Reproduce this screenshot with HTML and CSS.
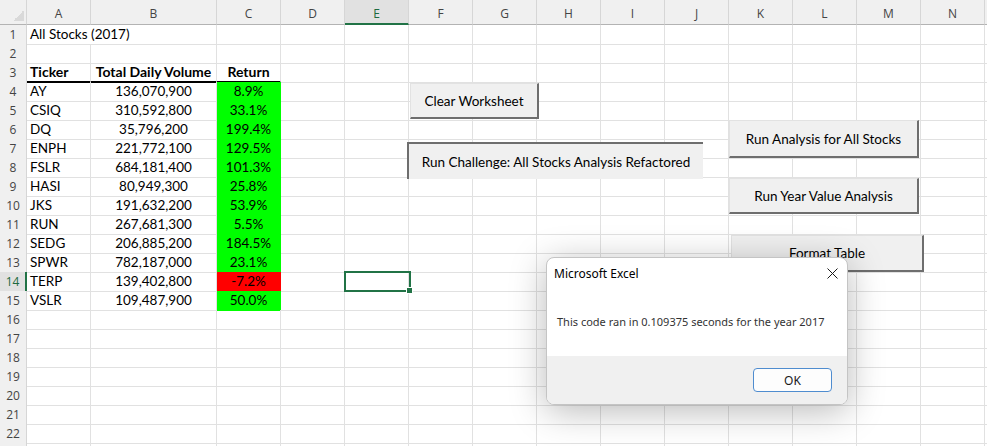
FILE: index.html
```html
<!DOCTYPE html>
<html>
<head>
<meta charset="utf-8">
<title>All Stocks (2017)</title>
<link rel="stylesheet" href="styles.css">
</head>
<body>
<div class="sheet">
  <div class="row hdr">
    <span class="corner"><i class="tri"></i></span><span>A</span><span>B</span><span>C</span><span>D</span><span class="selcol">E</span><span>F</span><span>G</span><span>H</span><span>I</span><span>J</span><span>K</span><span>L</span><span>M</span><span>N</span><span></span>
  </div>
  <div class="row"><span class="rh">1</span><span class="nb">All Stocks (2017)</span><span></span><span></span><span></span><span></span><span></span><span></span><span></span><span></span><span></span><span></span><span></span><span></span><span></span><span></span></div>
  <div class="row"><span class="rh">2</span><span></span><span></span><span></span><span></span><span></span><span></span><span></span><span></span><span></span><span></span><span></span><span></span><span></span><span></span><span></span></div>
  <div class="row"><span class="rh">3</span><span class="th">Ticker</span><span class="th ctr">Total Daily Volume</span><span class="th ctr">Return</span><span></span><span></span><span></span><span></span><span></span><span></span><span></span><span></span><span></span><span></span><span></span><span></span></div>
  <div class="row"><span class="rh">4</span><span>AY</span><span class="ctr">136,070,900</span><span class="ctr up">8.9%</span><span></span><span></span><span></span><span></span><span></span><span></span><span></span><span></span><span></span><span></span><span></span><span></span></div>
  <div class="row"><span class="rh">5</span><span>CSIQ</span><span class="ctr">310,592,800</span><span class="ctr up">33.1%</span><span></span><span></span><span></span><span></span><span></span><span></span><span></span><span></span><span></span><span></span><span></span><span></span></div>
  <div class="row"><span class="rh">6</span><span>DQ</span><span class="ctr">35,796,200</span><span class="ctr up">199.4%</span><span></span><span></span><span></span><span></span><span></span><span></span><span></span><span></span><span></span><span></span><span></span><span></span></div>
  <div class="row"><span class="rh">7</span><span>ENPH</span><span class="ctr">221,772,100</span><span class="ctr up">129.5%</span><span></span><span></span><span></span><span></span><span></span><span></span><span></span><span></span><span></span><span></span><span></span><span></span></div>
  <div class="row"><span class="rh">8</span><span>FSLR</span><span class="ctr">684,181,400</span><span class="ctr up">101.3%</span><span></span><span></span><span></span><span></span><span></span><span></span><span></span><span></span><span></span><span></span><span></span><span></span></div>
  <div class="row"><span class="rh">9</span><span>HASI</span><span class="ctr">80,949,300</span><span class="ctr up">25.8%</span><span></span><span></span><span></span><span></span><span></span><span></span><span></span><span></span><span></span><span></span><span></span><span></span></div>
  <div class="row"><span class="rh">10</span><span>JKS</span><span class="ctr">191,632,200</span><span class="ctr up">53.9%</span><span></span><span></span><span></span><span></span><span></span><span></span><span></span><span></span><span></span><span></span><span></span><span></span></div>
  <div class="row"><span class="rh">11</span><span>RUN</span><span class="ctr">267,681,300</span><span class="ctr up">5.5%</span><span></span><span></span><span></span><span></span><span></span><span></span><span></span><span></span><span></span><span></span><span></span><span></span></div>
  <div class="row"><span class="rh">12</span><span>SEDG</span><span class="ctr">206,885,200</span><span class="ctr up">184.5%</span><span></span><span></span><span></span><span></span><span></span><span></span><span></span><span></span><span></span><span></span><span></span><span></span></div>
  <div class="row"><span class="rh">13</span><span>SPWR</span><span class="ctr">782,187,000</span><span class="ctr up">23.1%</span><span></span><span></span><span></span><span></span><span></span><span></span><span></span><span></span><span></span><span></span><span></span><span></span></div>
  <div class="row"><span class="rh selrow">14</span><span>TERP</span><span class="ctr">139,402,800</span><span class="ctr down">-7.2%</span><span></span><span></span><span></span><span></span><span></span><span></span><span></span><span></span><span></span><span></span><span></span><span></span></div>
  <div class="row"><span class="rh">15</span><span>VSLR</span><span class="ctr">109,487,900</span><span class="ctr up">50.0%</span><span></span><span></span><span></span><span></span><span></span><span></span><span></span><span></span><span></span><span></span><span></span><span></span></div>
  <div class="row"><span class="rh">16</span><span></span><span></span><span></span><span></span><span></span><span></span><span></span><span></span><span></span><span></span><span></span><span></span><span></span><span></span><span></span></div>
  <div class="row"><span class="rh">17</span><span></span><span></span><span></span><span></span><span></span><span></span><span></span><span></span><span></span><span></span><span></span><span></span><span></span><span></span><span></span></div>
  <div class="row"><span class="rh">18</span><span></span><span></span><span></span><span></span><span></span><span></span><span></span><span></span><span></span><span></span><span></span><span></span><span></span><span></span><span></span></div>
  <div class="row"><span class="rh">19</span><span></span><span></span><span></span><span></span><span></span><span></span><span></span><span></span><span></span><span></span><span></span><span></span><span></span><span></span><span></span></div>
  <div class="row"><span class="rh">20</span><span></span><span></span><span></span><span></span><span></span><span></span><span></span><span></span><span></span><span></span><span></span><span></span><span></span><span></span><span></span></div>
  <div class="row"><span class="rh">21</span><span></span><span></span><span></span><span></span><span></span><span></span><span></span><span></span><span></span><span></span><span></span><span></span><span></span><span></span><span></span></div>
  <div class="row"><span class="rh">22</span><span></span><span></span><span></span><span></span><span></span><span></span><span></span><span></span><span></span><span></span><span></span><span></span><span></span><span></span><span></span></div>
  <div class="row"><span class="rh"></span><span></span><span></span><span></span><span></span><span></span><span></span><span></span><span></span><span></span><span></span><span></span><span></span><span></span><span></span><span></span></div>

  <div class="sel"><i class="handle"></i></div>

  <button class="btn raised btn-clear">Clear Worksheet</button>
  <button class="btn pressed btn-challenge">Run Challenge: All Stocks Analysis Refactored</button>
  <button class="btn raised btn-all">Run Analysis for All Stocks</button>
  <button class="btn raised btn-year">Run Year Value Analysis</button>
  <button class="btn raised btn-format">Format Table</button>

  <div class="dlg">
    <div class="dlg-head">
      <span class="dlg-title">Microsoft Excel</span>
      <svg class="dlg-x" width="11" height="11" viewBox="0 0 11 11"><path d="M0.5 0.5 L10.5 10.5 M10.5 0.5 L0.5 10.5" stroke="#1a1a1a" stroke-width="1" fill="none"/></svg>
    </div>
    <div class="dlg-body">This code ran in 0.109375 seconds for the year 2017</div>
    <div class="dlg-foot"><button class="ok">OK</button></div>
  </div>
</div>
</body>
</html>
```
FILE: styles.css
```css
html, body {
  margin: 0;
  padding: 0;
  background: #fff;
}
body {
  width: 987px;
  height: 446px;
  overflow: hidden;
  font-family: Lato, "Liberation Sans", sans-serif;
}
.sheet {
  position: relative;
  width: 987px;
  height: 446px;
  overflow: hidden;
}
.row {
  display: grid;
  grid-template-columns: 27px 64px 126px repeat(13, 64px);
  height: 19px;
}
.row > span {
  box-sizing: border-box;
  border-right: 1px solid #e1e1e1;
  border-bottom: 1px solid #e1e1e1;
  font-size: 13.5px;
  line-height: 18px;
  padding: 0 3px;
  white-space: nowrap;
  color: #000;
  overflow: visible;
}
.row > span.nb { border-right-color: transparent; }
.row > span.ctr { text-align: center; }
.row > span.th { font-weight: bold; font-size: 14px; border-bottom: 2px solid #000; line-height: 18px; }
.row > span.up { background: #00ff00; border-color: #00ff00; }
.row > span.down { background: #ff0000; border-color: #ff0000; }

/* column headers */
.row.hdr { height: 25px; }
.row.hdr > span {
  background: #f0f0f0;
  border-right: 1px solid #d6d6d6;
  border-bottom: 1px solid #b3b3b3;
  font-family: "Open Sans", "Noto Sans", sans-serif;
  font-size: 12px;
  line-height: 16px;
  padding-top: 6px;
  text-align: center;
  color: #444;
}
.row.hdr > span.corner { position: relative; padding: 0; }
.tri {
  position: absolute;
  right: 2px;
  bottom: 3px;
  width: 11px;
  height: 11px;
  background: linear-gradient(to top left, #d9d9d9 50%, transparent 50%);
}
.row.hdr > span.selcol {
  background: #e1e1e1;
  border-bottom: 2px solid #217346;
  color: #1d6a40;
}

/* row headers */
.row > span.rh {
  background: #f0f0f0;
  border-right: 1px solid #d6d6d6;
  border-bottom: 1px solid #e1e1e1;
  font-family: "Open Sans", "Noto Sans", sans-serif;
  font-size: 12px;
  line-height: 19px;
  text-align: center;
  padding: 0;
  color: #444;
}
.row > span.rh.selrow {
  background: #e1e1e1;
  border-right: 2px solid #217346;
  color: #1d6a40;
}

/* active cell */
.sel {
  position: absolute;
  left: 344px;
  top: 271px;
  width: 67px;
  height: 21px;
  box-sizing: border-box;
  border: 2px solid #217346;
}
.handle {
  position: absolute;
  right: -4px;
  bottom: -4px;
  width: 5px;
  height: 5px;
  background: #217346;
  border: 1px solid #fff;
}

/* form buttons */
.btn {
  position: absolute;
  box-sizing: border-box;
  background: #f0f0f0;
  font-family: Lato, "Liberation Sans", sans-serif;
  font-size: 13.5px;
  color: #000;
  padding: 0;
  margin: 0;
  text-align: center;
  white-space: nowrap;
}
.btn.raised {
  border: 1px solid #e2e2e2;
  border-right: 2px solid #6e6e6e;
  border-bottom: 2px solid #6e6e6e;
}
.btn.pressed {
  border: 0;
  border-top: 2px solid #6e6e6e;
  border-left: 2px solid #6e6e6e;
}
.btn-clear { left: 410px; top: 83px; width: 129px; height: 36px; }
.btn-challenge { left: 407px; top: 142px; width: 296px; height: 37px; }
.btn-all { left: 729px; top: 120px; width: 190px; height: 38px; }
.btn-year { left: 729px; top: 178px; width: 190px; height: 36px; }
.btn-format { left: 731px; top: 235px; width: 193px; height: 37px; }

/* message box */
.dlg {
  position: absolute;
  left: 546px;
  top: 257px;
  width: 302px;
  height: 148px;
  box-sizing: border-box;
  background: #fff;
  border: 1px solid #c4c4c4;
  border-radius: 8px;
  box-shadow: 0 6px 36px rgba(0, 0, 0, 0.28);
  display: flex;
  flex-direction: column;
  overflow: hidden;
  font-family: "Noto Sans", "Open Sans", sans-serif;
}
.dlg-head {
  height: 30px;
  display: flex;
  justify-content: space-between;
  align-items: center;
  padding: 0 9px 0 7px;
}
.dlg-title {
  font-size: 12px;
  color: #000;
}
.dlg-body {
  flex: 1;
  display: flex;
  align-items: center;
  padding-left: 10px;
  padding-bottom: 2px;
  font-size: 11px;
  color: #333;
}
.dlg-foot {
  height: 48px;
  background: #f0f0f0;
  display: flex;
  justify-content: flex-end;
  align-items: center;
  padding-right: 15px;
}
.ok {
  width: 79px;
  height: 24px;
  box-sizing: border-box;
  background: #fdfdfd;
  border: 1px solid #4f8ccf;
  border-radius: 4px;
  font-family: "Noto Sans", "Open Sans", sans-serif;
  font-size: 12px;
  color: #1a1a1a;
  padding: 0;
}
```
